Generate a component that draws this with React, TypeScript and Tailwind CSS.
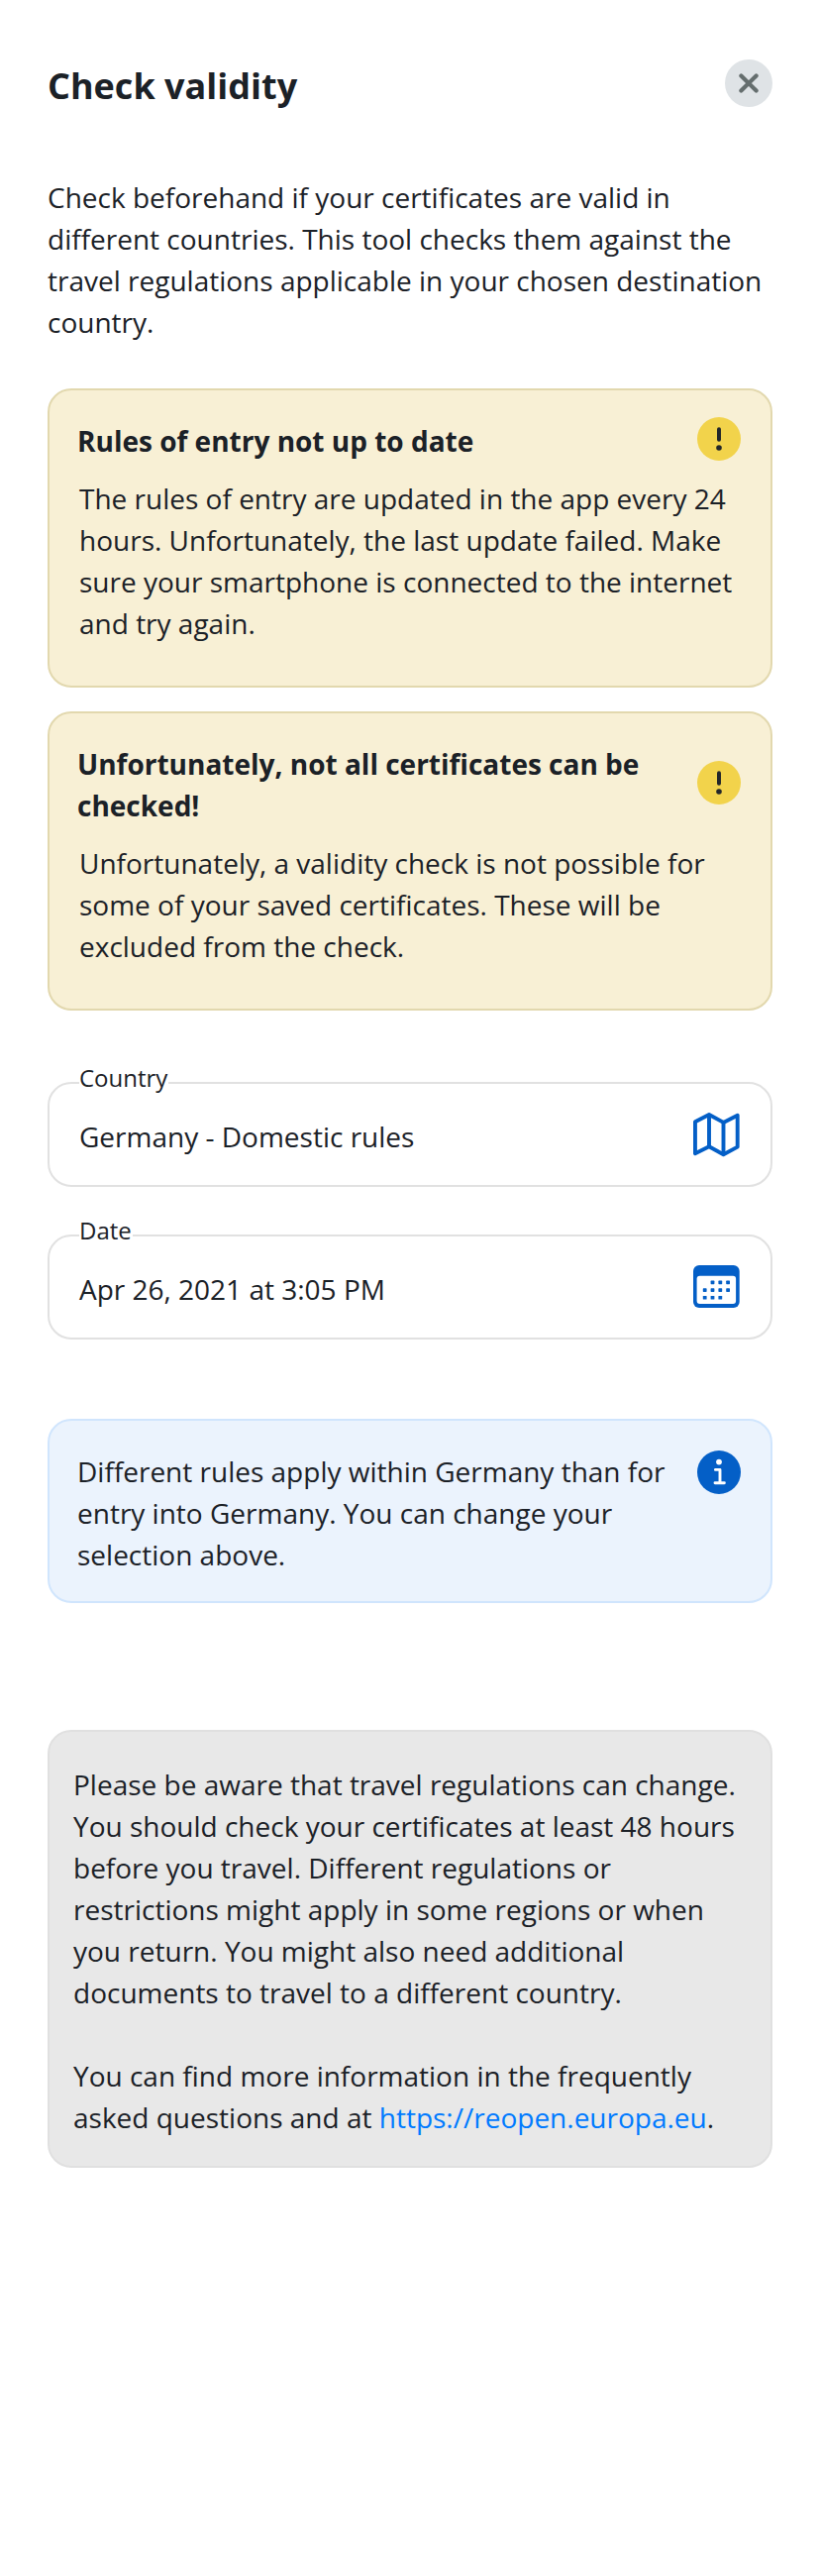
import React from 'react';

function CloseButton() {
  return (
    <button aria-label="Close" className="h-12 w-12 shrink-0">
      <svg viewBox="0 0 48 48" className="h-12 w-12">
        <circle cx="24" cy="24" r="24" fill="#dfe3e6" />
        <path d="M16.4 16.4 31.6 31.6M31.6 16.4 16.4 31.6" stroke="#656e6e" strokeWidth="4.2" strokeLinecap="round" />
      </svg>
    </button>
  );
}

function WarningIcon() {
  return (
    <svg viewBox="0 0 44 44" className="h-11 w-11 shrink-0">
      <circle cx="22" cy="22" r="22" fill="#f2d34b" />
      <path d="M22 12.3V22.7" stroke="#22262a" strokeWidth="4" strokeLinecap="round" />
      <circle cx="22" cy="31" r="2.8" fill="#22262a" />
    </svg>
  );
}

function InfoIcon() {
  return (
    <svg viewBox="0 0 44 44" className="h-11 w-11 shrink-0">
      <circle cx="22" cy="22" r="22" fill="#045fc7" />
      <circle cx="22" cy="11.6" r="2.9" fill="#fff" />
      <path d="M18.4 19.4H23V32.8M18 32.8H27.4" fill="none" stroke="#fff" strokeWidth="2.9" strokeLinecap="round" strokeLinejoin="round" />
    </svg>
  );
}

function MapIcon() {
  return (
    <svg viewBox="0 0 48 48" className="h-12 w-12 shrink-0" fill="none" stroke="#045fc7" strokeWidth="3.9" strokeLinejoin="round">
      <path d="M1.95 9.3 16 2 30.5 9.9 44.7 2.7V34.6L30.5 42.2 16 34.3 1.95 41.2Z" />
      <path d="M16 2V34.3M30.5 9.9V42.2" />
    </svg>
  );
}

function CalendarIcon() {
  const dots = [
    [17.6, 16], [25.4, 16], [33.2, 16],
    [9.8, 23.7], [17.6, 23.7], [25.4, 23.7], [33.2, 23.7],
    [9.8, 31.4], [17.6, 31.4], [25.4, 31.4],
  ];
  return (
    <svg viewBox="0 0 48 48" className="h-12 w-12 shrink-0">
      <rect width="46.7" height="43" rx="6" fill="#045fc7" />
      <rect x="3.6" y="10.8" width="39.5" height="28.3" rx="3" fill="#fff" />
      {dots.map(([x, y]) => (
        <rect key={`${x}-${y}`} x={x} y={y - 0.4} width="3.8" height="3.6" rx="0.6" fill="#045fc7" />
      ))}
    </svg>
  );
}

function WarningCard({ title, iconClass, children }: { title: string; iconClass: string; children: React.ReactNode }) {
  return (
    <section className="h-[302px] rounded-[24px] border-2 border-[#e2d8ae] bg-[#f8f0d5] pt-[30px] pr-[30px] pl-7">
      <div className="flex items-start justify-between">
        <h2 className="w-[590px] font-bold">{title}</h2>
        <div className={iconClass}>
          <WarningIcon />
        </div>
      </div>
      <p className="mt-4 -mr-2 pl-0.5">{children}</p>
    </section>
  );
}

function Field({ label, value, icon }: { label: string; value: string; icon: React.ReactNode }) {
  return (
    <div className="relative flex h-[106px] items-start justify-between rounded-[24px] border-2 border-[#e1e1e1] pt-8 pr-[30px] pl-[30px]">
      <span className="absolute -top-6 left-[30px] bg-white pr-px text-[24px] leading-9">{label}</span>
      <span>{value}</span>
      <div className="-mt-[3px]">{icon}</div>
    </div>
  );
}

export default function App() {
  return (
    <main className="min-h-[2600px] w-[828px] bg-white px-12 pt-[60px] font-['Open_Sans',sans-serif] text-[28px] leading-[42px] text-[#1b2127]">
      <header className="flex items-start justify-between">
        <h1 className="text-[36px] leading-[54px] font-bold">Check validity</h1>
        <CloseButton />
      </header>
      <p className="mt-16">
        Check beforehand if your certificates are valid in different countries. This tool checks them against the travel regulations applicable in your chosen destination country.
      </p>
      <div className="mt-[46px] flex flex-col gap-6">
        <WarningCard title="Rules of entry not up to date" iconClass="-mt-[3px] h-[42px]">
          The rules of entry are updated in the app every 24 hours. Unfortunately, the last update failed. Make sure your smartphone is connected to the internet and try again.
        </WarningCard>
        <WarningCard title="Unfortunately, not all certificates can be checked!" iconClass="mt-[18px]">
          Unfortunately, a validity check is not possible for some of your saved certificates. These will be excluded from the check.
        </WarningCard>
      </div>
      <div className="mt-[72px] flex flex-col gap-12">
        <Field label="Country" value="Germany - Domestic rules" icon={<MapIcon />} />
        <Field label="Date" value="Apr 26, 2021 at 3:05 PM" icon={<CalendarIcon />} />
      </div>
      <section className="mt-20 flex h-[186px] items-start justify-between rounded-[24px] border-2 border-[#d0e5fd] bg-[#ebf3fd] pt-[30px] pr-[30px] pl-7">
        <p className="w-[600px]">Different rules apply within Germany than for entry into Germany. You can change your selection above.</p>
        <InfoIcon />
      </section>
      <section className="mt-32 h-[442px] rounded-[24px] border-2 border-[#e0e0e0] bg-[#e8e8e8] px-6 pt-8">
        <p>
          Please be aware that travel regulations can change. You should check your certificates at least 48 hours before you travel. Different regulations or restrictions might apply in some regions or when you return. You might also need additional documents to travel to a different country.
        </p>
        <p className="mt-[42px]">
          You can find more information in the frequently asked questions and at <a className="text-[#007aff]">https://reopen.europa.eu</a>.
        </p>
      </section>
    </main>
  );
}
